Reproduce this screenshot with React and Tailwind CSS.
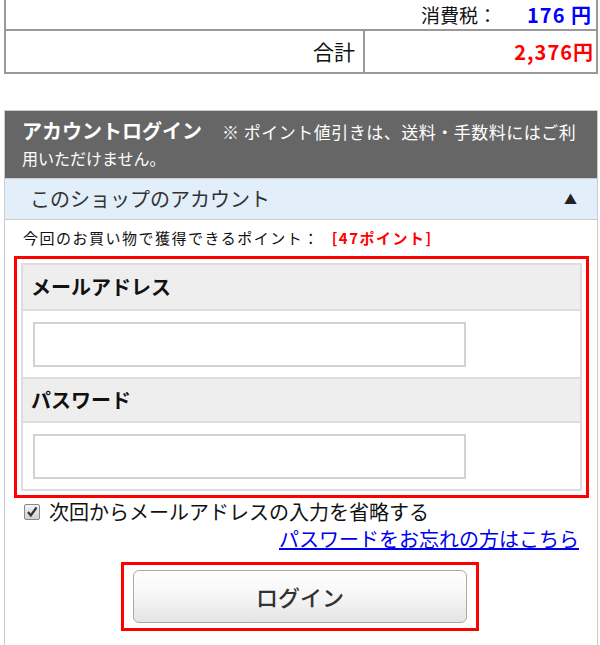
export default function App() {
  const jp = { fontFamily: '"Noto Sans CJK JP", "Noto Sans", sans-serif' };
  return (
    <div className="w-[600px] h-[645px] overflow-hidden bg-white text-[#111]" style={jp}>
      {/* totals table */}
      <div className="ml-[4px] w-[594px] border-2 border-[#999] border-t-0">
        <div className="h-[31px] flex items-center justify-end pr-[4px] border-b-2 border-[#999]">
          <span className="text-[19px] leading-none">消費税：</span>
          <span className="ml-[30px] text-[20px] leading-none font-bold tracking-[1px] text-[#0000ff]">176 円</span>
        </div>
        <div className="h-[41px] flex">
          <div className="flex-1 flex items-center justify-end pr-[8px] border-r-2 border-[#999] text-[21px]">合計</div>
          <div className="w-[231px] flex items-center justify-end pr-[2px] text-[20px] font-bold tracking-[1px] text-[#ff0000]">2,376円</div>
        </div>
      </div>

      {/* login box */}
      <div className="mt-[36px] ml-[4px] w-[594px] h-[600px] border border-[#ccc]">
        <div className="bg-[#666] text-white px-[17px] pt-[6px] pb-[6px] h-[67px]">
          <div className="leading-[28px] whitespace-nowrap">
            <span className="text-[20px] font-bold">アカウントログイン</span>
            <span className="ml-[20px] text-[17px] tracking-[0.5px]">※ ポイント値引きは、送料・手数料にはご利</span>
          </div>
          <div className="text-[16px] leading-[24px]">用いただけません。</div>
        </div>
        <div className="h-[42px] bg-[#e3eefb] border-t border-b border-[#ccc] flex items-center justify-between pl-[25px] pr-[20px]">
          <span className="text-[20px] text-[#333]">このショップのアカウント</span>
          <span className="text-[13px] text-[#222]">▲</span>
        </div>
        <div className="h-[36px] flex items-center pl-[18px] text-[15px] tracking-[1.5px] whitespace-nowrap">
          今回のお買い物で獲得できるポイント：
          <span className="ml-[12px] text-[#ff0000] font-bold">[47ポイント]</span>
        </div>
        <div className="ml-[9px] w-[575px] border-[3px] border-[#ff0000] p-[4px]">
          <div className="border-2 border-[#ddd]">
            <div className="h-[46px] bg-[#eee] border-b-2 border-[#ddd] flex items-center pl-[8px] text-[20px] font-bold">メールアドレス</div>
            <div className="h-[68px] flex items-center pl-[10px] border-b-2 border-[#ddd]">
              <div className="w-[433px] h-[45px] border-2 border-[#d2d2d2] bg-white"></div>
            </div>
            <div className="h-[44px] bg-[#eee] border-b-2 border-[#ddd] flex items-center pl-[8px] text-[20px] font-bold">パスワード</div>
            <div className="h-[66px] flex items-center pl-[10px]">
              <div className="w-[433px] h-[45px] border-2 border-[#d2d2d2] bg-white"></div>
            </div>
          </div>
        </div>
        <div className="flex items-center pl-[19px] mt-[1px] h-[26px]">
          <div className="w-[16px] h-[16px] border border-[#888] rounded-[2px] bg-gradient-to-b from-[#f4f4f4] to-[#d0d0d0] flex items-center justify-center">
            <svg width="12" height="12" viewBox="0 0 12 12"><path d="M2 6 L4.8 9.5 L10.5 1.5" stroke="#333" strokeWidth="2.2" fill="none" /></svg>
          </div>
          <span className="ml-[9px] text-[20px] leading-[26px]">次回からメールアドレスの入力を省略する</span>
        </div>
        <div className="flex justify-end pr-[18px] mt-[1px]">
          <a href="#" className="text-[20px] leading-[26px] text-[#0000ee] underline">パスワードをお忘れの方はこちら</a>
        </div>
        <div className="mt-[10px] ml-[116px] w-[358px] h-[69px] border-[3px] border-[#ff0000] px-[9px] py-[5px]">
          <div className="h-full rounded-[6px] border border-[#aaa] bg-gradient-to-b from-[#ffffff] via-[#f6f6f6] to-[#e4e4e4] flex items-center justify-center text-[22px] text-[#333] font-medium">
            ログイン
          </div>
        </div>
      </div>
    </div>
  );
}
